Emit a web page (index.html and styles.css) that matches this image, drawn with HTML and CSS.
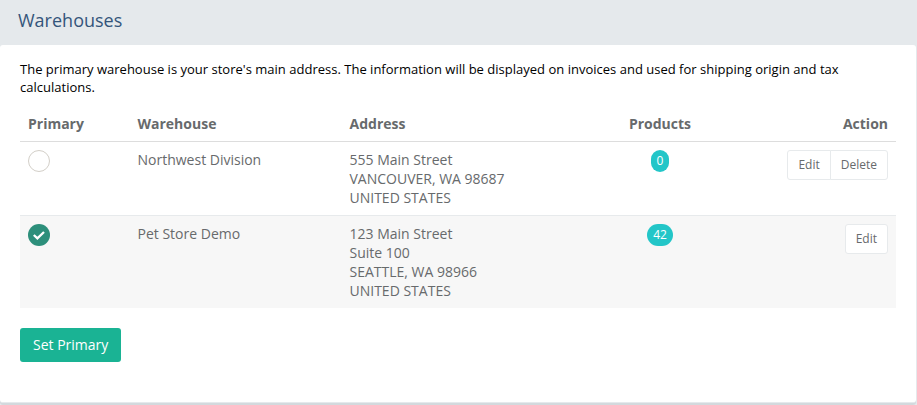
FILE: index.html
```html
<!DOCTYPE html>
<html lang="en">
	<head>
		<meta charset="UTF-8" />
		<meta name="viewport" content="width=device-width, initial-scale=1.0" />
		<title>Warehouses</title>

		<link rel="stylesheet" href="styles.css">
	</head>
	<body>
		<div class="panel">
			<div class="panel-heading">
				<h3 class="panel-title">Warehouses</h3>
			</div>
			<div class="panel-body">
				<p class="intro">
					The primary warehouse is your store's main address. The information will be displayed on invoices and used for shipping origin and tax calculations.
				</p>

				<table class="table">
					<thead>
						<tr>
							<th class="col-primary">Primary</th>
							<th class="col-warehouse">Warehouse</th>
							<th class="col-address">Address</th>
							<th class="col-products">Products</th>
							<th class="col-action">Action</th>
						</tr>
					</thead>
					<tbody>
						<tr>
							<td><span class="radio"></span></td>
							<td>Northwest Division</td>
							<td>
								555 Main Street<br />
								VANCOUVER, WA 98687<br />
								UNITED STATES
							</td>
							<td class="col-products"><span class="badge">0</span></td>
							<td>
								<div class="btn-group">
									<button class="btn-sm">Edit</button>
									<button class="btn-sm">Delete</button>
								</div>
							</td>
						</tr>
						<tr class="selected">
							<td>
								<span class="radio checked">
									<svg width="22" height="22" viewBox="0 0 22 22">
										<path d="M5.8 11 L9.4 14.4 L16 8" />
									</svg>
								</span>
							</td>
							<td>Pet Store Demo</td>
							<td>
								123 Main Street<br />
								Suite 100<br />
								SEATTLE, WA 98966<br />
								UNITED STATES
							</td>
							<td class="col-products"><span class="badge">42</span></td>
							<td>
								<div class="btn-group">
									<button class="btn-sm">Edit</button>
								</div>
							</td>
						</tr>
					</tbody>
				</table>

				<button class="btn">Set Primary</button>
			</div>
		</div>
	</body>
</html>
```

FILE: styles.css
```css
* {
	box-sizing: border-box;
}

body {
	margin: 0;
	background-color: #e5e9ec;
	font-family: "Open Sans", "Noto Sans", sans-serif;
	font-size: 14px;
	line-height: 19px;
	color: #676a6c;
}

.panel {
	width: 917px;
	height: 405px;
	overflow: hidden;
}

.panel-heading {
	height: 45px;
	padding: 8px 18px;
}

.panel-title {
	margin: 0;
	font-size: 18px;
	font-weight: 400;
	line-height: 25px;
	color: #34557b;
}

.panel-body {
	width: 916px;
	height: 358px;
	padding: 15px 20px 0;
	border-bottom: 1px solid #e5e9ec;
	background-color: white;
	border-radius: 3px;
	box-shadow: 0 2px 0 #d3d9dd;
}

.intro {
	margin: 0 0 11px;
	font-size: 13px;
	line-height: 18px;
	letter-spacing: 0.01px;
	color: black;
}

.table {
	width: 876px;
	margin-bottom: 20px;
	border-spacing: 0;
	table-layout: fixed;
}

.table th {
	height: 35px;
	padding: 6px 8px 8px;
	border-bottom: 1px solid #ddd;
	text-align: left;
	font-weight: 700;
}

.table td {
	padding: 8px;
	vertical-align: top;
}

.col-primary {
	width: 109.5px;
}

.col-warehouse {
	width: 212px;
}

.col-address {
	width: 251.5px;
}

.table .col-products {
	width: 134px;
	text-align: center;
}

.table .col-action {
	text-align: right;
}

.selected td {
	border-top: 1px solid #e7eaec;
	background-color: #f7f7f7;
}

.radio {
	display: block;
	width: 22px;
	height: 22px;
	border: 1px solid #d3cfc8;
	border-radius: 50%;
}

.checked {
	border: none;
	background-color: #2d8f7b;
}

.checked svg {
	display: block;
	fill: none;
	stroke: white;
	stroke-width: 2.3;
}

.badge {
	display: inline-block;
	height: 22px;
	padding: 0 6px;
	border-radius: 11px;
	background-color: #23c6c8;
	color: white;
	font-size: 12px;
	line-height: 21px;
	vertical-align: top;
}

.btn-group {
	display: flex;
	justify-content: flex-end;
}

.btn-sm {
	height: 30px;
	padding: 0 10px 2px;
	border: 1px solid #e7eaec;
	border-radius: 3px;
	background-color: white;
	color: #676a6c;
	font-family: inherit;
	font-size: 12px;
}

.btn-sm:not(:last-child) {
	margin-right: -1px;
	border-radius: 3px 0 0 3px;
}

.btn-sm + .btn-sm {
	border-radius: 0 3px 3px 0;
}

.btn {
	display: block;
	height: 34px;
	padding: 0 13px 2px;
	border: none;
	border-radius: 3px;
	background-color: #1ab394;
	color: white;
	font-family: inherit;
	font-size: 14px;
}
```
